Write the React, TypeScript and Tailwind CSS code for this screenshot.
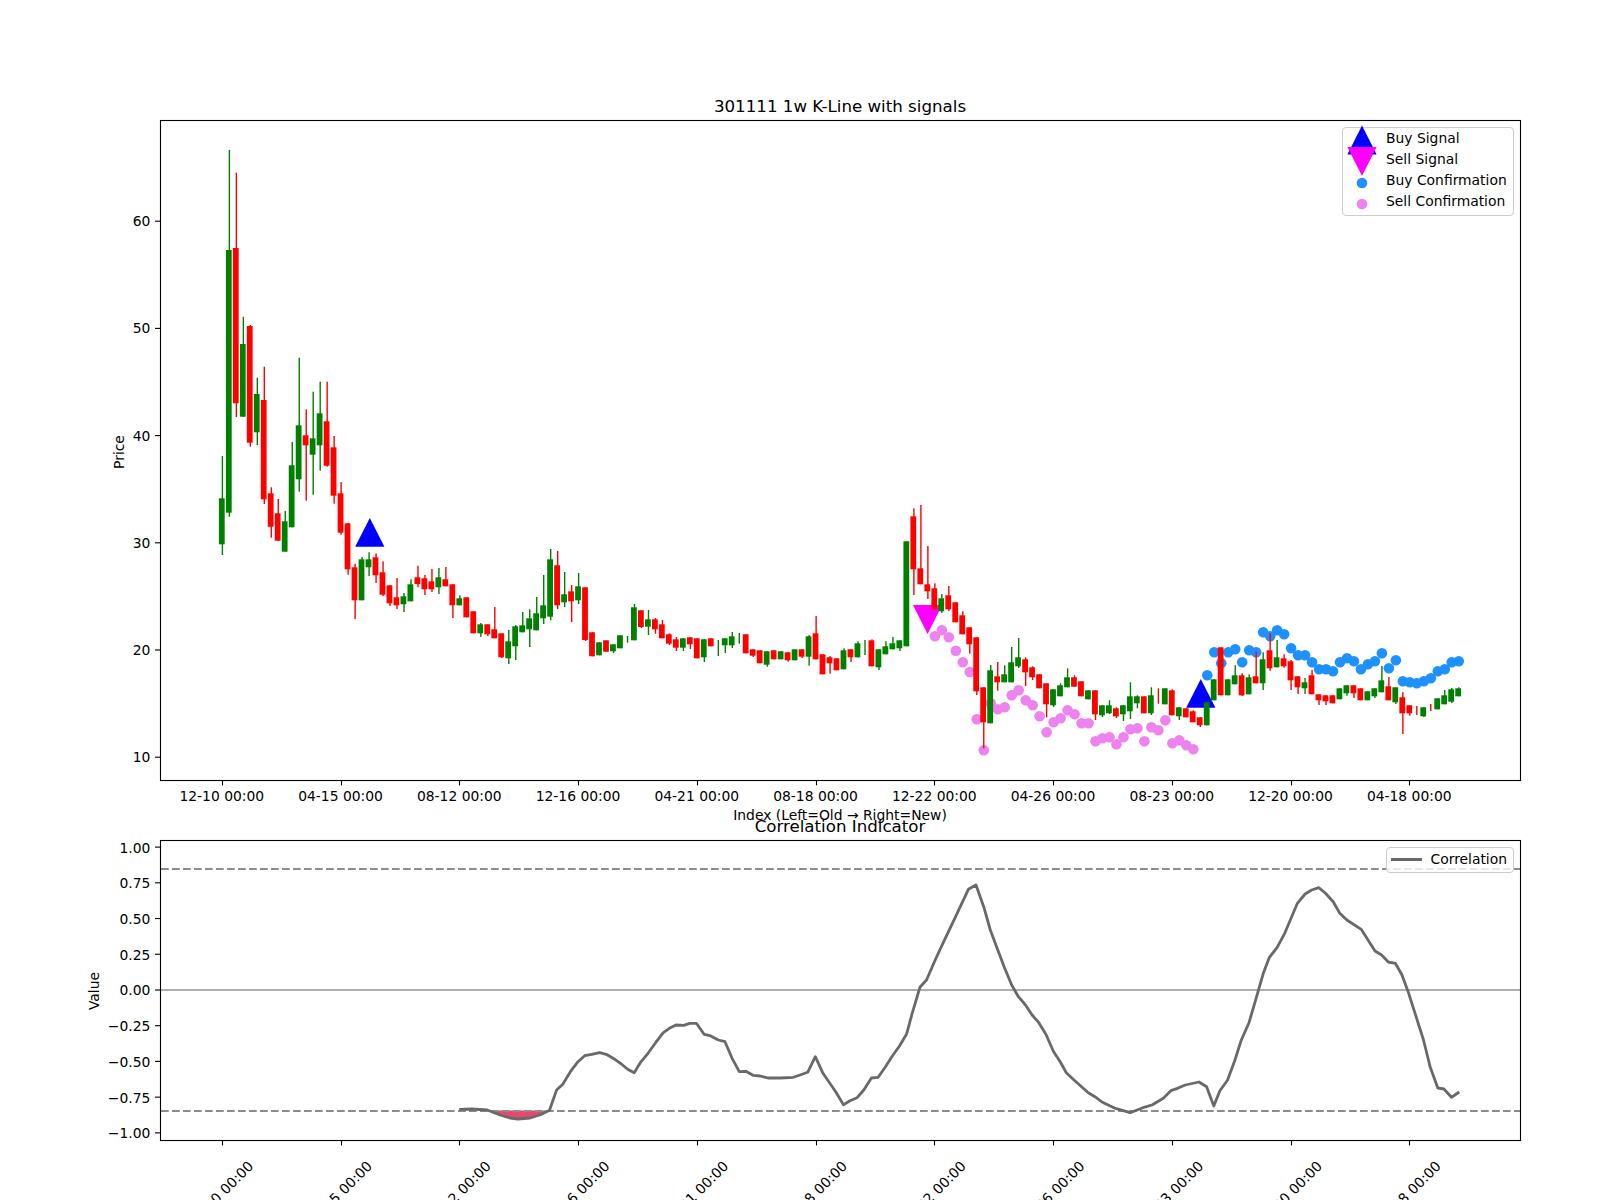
const GREEN = "#008000";
const RED = "#ff0000";

// candle index -> px
const cx = (i: number) => 221.8 + 6.985 * i;

// color, wick top, body top, body bottom, wick bottom (all in page px)
const candles: [string, number, number, number, number][] = [
  ["g", 456, 498.3, 544.3, 555], ["g", 150, 250, 512.7, 516.7], ["r", 172.7, 248, 403.3, 417], ["g", 316.7, 344, 416.7, 417],
  ["r", 325, 326, 442.7, 446.7], ["g", 377.7, 394, 432.3, 445], ["r", 366.7, 400, 499.3, 504], ["r", 487.3, 493.3, 526.7, 537.7],
  ["r", 499, 513.3, 540.7, 541], ["g", 511, 521.3, 551.7, 551.7], ["g", 442, 465.3, 527.3, 527.3], ["g", 357.7, 425.3, 479.3, 491.7],
  ["r", 409.3, 435.3, 445.3, 500.7], ["g", 391.7, 438.3, 454.7, 494.7], ["g", 381.7, 413.3, 445.3, 470.7], ["r", 381.7, 421.3, 465.7, 466.7],
  ["r", 436, 447.3, 495.7, 503.7], ["r", 482, 493.3, 532.7, 534.7], ["r", 523.3, 523.3, 569.3, 574.7], ["r", 563.7, 567.3, 600.3, 619],
  ["g", 557, 559.3, 600.3, 600.3], ["g", 552.3, 559.3, 567.3, 576], ["r", 553.3, 557.3, 575.3, 583], ["r", 561.3, 572.3, 594.7, 596],
  ["r", 585.3, 585.3, 603.3, 606], ["r", 578, 597.3, 605.3, 609], ["g", 593, 596.3, 604.3, 612], ["g", 579.3, 584.3, 601.3, 601.3],
  ["r", 565.7, 577.3, 584, 587.3], ["r", 575, 578.3, 589.3, 595], ["r", 569, 581.3, 589.3, 592], ["g", 568, 577.3, 587.3, 594],
  ["r", 567, 579.3, 586.3, 586.3], ["r", 584.3, 584.3, 605.3, 618], ["g", 595.3, 598.3, 605.3, 605.3], ["r", 597.3, 597.3, 617.3, 617.3],
  ["r", 611.3, 611.3, 633.3, 633.3], ["g", 623, 624.3, 633.3, 637], ["r", 624.3, 624.3, 634.3, 636], ["r", 607, 629.3, 638.3, 638.3],
  ["r", 633.3, 633.3, 657.3, 658], ["g", 630, 641.3, 658.3, 664], ["g", 625, 626.3, 646.3, 660], ["g", 612, 625.3, 632.3, 632.3],
  ["g", 609.3, 618.3, 629.3, 647], ["g", 597, 613.3, 630.3, 630.3], ["g", 575, 605.3, 618.3, 624], ["g", 549, 559.3, 616.7, 620.3],
  ["r", 551, 565.3, 605.3, 609], ["g", 572, 594.3, 602.3, 607], ["r", 585, 591.3, 601.3, 622], ["g", 573, 586.3, 600.3, 604],
  ["r", 587.3, 587.3, 640, 641], ["r", 632.3, 632.3, 656.3, 656.3], ["g", 642.3, 642.3, 655.3, 655.3], ["r", 640.3, 640.3, 651.7, 651.7],
  ["g", 644.3, 644.3, 651.3, 653], ["g", 635.3, 635.3, 648.3, 648.3], ["g", 636, 639, 639, 642.7], ["g", 604, 607.3, 640.3, 640.3],
  ["r", 610.3, 610.3, 627, 628], ["g", 610, 619.3, 626.7, 635], ["r", 618, 619.3, 629.3, 633.7], ["r", 620, 624.3, 638.3, 638.3],
  ["r", 633.3, 634.3, 643.7, 645], ["r", 637, 639.3, 647.7, 651], ["g", 638.3, 638.3, 647.7, 651], ["r", 637.3, 637.3, 644.3, 649],
  ["r", 638.3, 638.3, 658.3, 658.3], ["g", 639.3, 639.3, 657.3, 662], ["r", 638.3, 638.3, 646.3, 646.3], ["g", 640, 648, 648, 656],
  ["g", 638.3, 638.3, 645.3, 653], ["g", 632, 636.3, 645.3, 648], ["g", 633, 638, 638, 643.7], ["r", 634.3, 634.3, 653.3, 653.3],
  ["r", 649.3, 649.3, 655.7, 657], ["r", 650.3, 650.3, 663.3, 663.3], ["g", 651.3, 651.3, 664.7, 666.7], ["r", 650.3, 650.3, 659.3, 659.3],
  ["g", 651.3, 651.3, 659.3, 659.3], ["r", 652.3, 652.3, 660.3, 661.7], ["g", 649.3, 649.3, 660.3, 660.3], ["r", 649.3, 649.3, 656.7, 658],
  ["g", 635, 636.3, 656.7, 665.7], ["r", 616, 633.3, 659.3, 659.3], ["r", 654.3, 654.3, 674.3, 674.3], ["r", 656, 657.3, 663.3, 673.7],
  ["r", 658.3, 658.3, 670.3, 670.3], ["g", 648.3, 650.3, 669.3, 669.3], ["r", 649.3, 649.3, 657.3, 662], ["g", 641.3, 643.3, 657.3, 657.3],
  ["g", 640, 648, 648, 655], ["r", 639.3, 640.3, 666.3, 666.3], ["g", 649.3, 649.3, 667.3, 670], ["g", 641.3, 646.3, 654.3, 654.3],
  ["g", 637, 643.3, 649.3, 649.3], ["g", 640.3, 640.3, 648.3, 651], ["g", 541.3, 541.3, 646.3, 646.3], ["r", 508.3, 516.3, 569.3, 595],
  ["r", 505, 568.3, 584.3, 584.3], ["r", 546, 584.3, 591.3, 599], ["r", 583.3, 588.3, 609.3, 609.3], ["g", 594, 598.3, 611.3, 613],
  ["r", 586, 595.3, 609.3, 611], ["r", 602.3, 602.3, 622.3, 622.3], ["r", 611.3, 615.3, 634.3, 634.3], ["r", 627.3, 627.3, 644.3, 653.7],
  ["r", 637.3, 637.3, 691.3, 695], ["r", 687.3, 687.3, 722.3, 748.3], ["g", 665, 670.3, 723.3, 723.3], ["r", 662, 676.3, 682.3, 690.7],
  ["g", 665.3, 674.3, 682.3, 682.3], ["g", 647, 662.3, 682.3, 682.3], ["g", 638, 657.3, 666.3, 668], ["r", 657.3, 659.3, 672.3, 686],
  ["r", 666.3, 667.3, 677.3, 680], ["r", 674.3, 674.3, 688.3, 688.3], ["r", 683.3, 683.3, 704.3, 717.3], ["g", 689.3, 689.3, 705.3, 707],
  ["g", 683.3, 685.3, 696.3, 696.3], ["g", 668.3, 677.3, 687.3, 687.3], ["r", 675.3, 677.3, 686.7, 686.7], ["r", 681.3, 681.3, 696.3, 696.3],
  ["g", 690.3, 690.3, 699.3, 699.3], ["r", 690.3, 690.3, 714.3, 720], ["g", 705.3, 705.3, 715.3, 717], ["g", 700.3, 705.3, 713.3, 714],
  ["r", 707.3, 708.3, 716.3, 718], ["g", 705.3, 705.3, 714.3, 721], ["g", 682.3, 696.3, 711.3, 719], ["g", 695.3, 696.3, 703.3, 708.3],
  ["r", 696.3, 696.3, 713.3, 713.3], ["g", 687.3, 695.3, 713.3, 715], ["r", 688.3, 696, 696, 703.7], ["g", 688.3, 688.3, 704.3, 704.3],
  ["r", 689.3, 690.3, 715.3, 715.3], ["g", 707.3, 707.3, 716.3, 720], ["r", 708.3, 708.3, 717.3, 717.3], ["r", 710.3, 711.3, 722.3, 722.3],
  ["r", 717.3, 717.3, 725.3, 727], ["g", 702.3, 702.3, 725.3, 725.3], ["g", 679.3, 679.3, 700.3, 700.3], ["r", 647.3, 647.3, 695.3, 695.3],
  ["g", 679.3, 679.3, 695.3, 695.3], ["g", 665.3, 675.3, 684.3, 684.3], ["r", 673.3, 675.3, 695.3, 696], ["g", 674.3, 677.3, 694.3, 694.3],
  ["r", 651.3, 676.3, 683.3, 683.3], ["g", 652.3, 659.3, 683.3, 690], ["r", 633.3, 650.3, 668.3, 670.7], ["g", 640, 657.3, 667.3, 667.3],
  ["r", 654.3, 658.3, 666.3, 667.7], ["r", 660, 661.3, 680.3, 690], ["r", 676.3, 676.3, 687.3, 694], ["g", 678, 682.3, 688.3, 694],
  ["r", 670, 675.3, 694.3, 694.3], ["r", 694.3, 694.3, 700.3, 705], ["r", 695.3, 695.3, 701.3, 705], ["r", 695.3, 695.3, 703.3, 703.3],
  ["g", 688.3, 688.3, 699.3, 699.3], ["g", 685.3, 685.3, 693.3, 695.7], ["r", 685.3, 685.3, 693.3, 698], ["r", 688.3, 688.3, 700.3, 700.3],
  ["g", 691.3, 691.3, 700.3, 700.3], ["g", 688.3, 688.3, 696.3, 698], ["g", 666, 680.3, 692.3, 692.3], ["r", 677, 686.3, 700.3, 700.3],
  ["g", 687.3, 687.3, 702.3, 704], ["r", 692.3, 697.3, 713.3, 734], ["r", 705.3, 705.3, 713.3, 715.7], ["r", 706, 710, 710, 715],
  ["g", 707.3, 707.3, 716.3, 717], ["r", 704, 708, 708, 711], ["g", 698.3, 698.3, 709.3, 709.3], ["g", 690, 695.3, 704.3, 704.3],
  ["g", 688, 689.3, 701.7, 703], ["g", 687.3, 688.3, 696.3, 696.3],
];

// confirmation dots, one per candle starting at the given index
const sellStart = 102;
const sellDots = [
  636.3, 630.3, 637.3, 650.7, 662.3, 672, 719.3, 750.3, 703.3, 709.3, 707.3, 695.3, 690.3, 700.3, 705.3, 716.3, 732.3, 722.3, 718.3,
  710.3, 714.3, 723.3, 723.3, 741.3, 738.3, 737.3, 744.3, 737.3, 729.3, 728.3, 741.3, 727.3, 730.3, 720.3, 743.3, 740.3, 745.3, 749.3,
];
const buyStart = 141;
const buyDots = [
  675.3, 652.3, 663.3, 652.3, 649.3, 662.3, 650.3, 652.3, 632.3, 636.3, 630.3, 634.3, 648.3, 655.3, 655.3, 662.3, 669.3, 669.3, 671.3,
  662.3, 658.3, 661.3, 669.3, 664.3, 661.3, 653.3, 668.3, 660.3, 681.3, 682.3, 683.3, 681.3, 678.3, 671.3, 669.3, 662.3, 661.3,
];

const corr =
  "459.2,1109.3 472,1109 487.2,1110 500,1115 510,1118 518,1119 530,1118 541,1114.5 549.5,1110.3 556.6,1090 562.8,1084.3 570.4,1071.7 578,1061.7 584.7,1055.7 591.8,1054.3 599.5,1052.7 607.1,1054.7 614.8,1059.3 621.4,1064 627.6,1069.3 634.2,1072.7 640.3,1062.7 648,1053.3 655.6,1042.7 663.3,1032.7 669.4,1028.3 676,1025 683.7,1025.3 689.8,1023.3 696.4,1023.3 704.1,1034.3 710.2,1035.7 718.4,1040 725,1041.7 732.1,1058.3 739.3,1071.7 745.9,1071.3 753,1075.3 760.2,1076 767.9,1078 780.6,1078 793.4,1077.3 800,1075 807.7,1072.3 815.3,1056.7 823,1073.3 835.7,1091.7 843.4,1104.7 850,1100.7 857.1,1097.7 863.8,1090 871.4,1078 878.1,1077.3 885.2,1067.3 891.8,1056.7 899.5,1046 906.6,1034 912.2,1013.3 919.9,987.3 926.5,980 935.2,960 942.9,943.3 955.6,916.7 968.4,889.3 976,885 983.7,906.7 990.3,930 1004.1,966.7 1011.7,985 1018.4,996.7 1025.5,1005 1032.1,1015 1038.8,1022.7 1045.9,1034.3 1053.6,1051.7 1060.2,1061.7 1066.3,1072.7 1074,1080 1088.3,1092.7 1094.9,1096.7 1102,1102 1109.7,1105.7 1116.3,1108.7 1130.1,1112.7 1142.9,1107.7 1152,1105 1163.3,1098.3 1171.4,1090.3 1177.6,1088.3 1185.2,1085 1199,1082 1206.6,1086.7 1213.8,1106 1219.9,1090.7 1227.6,1080 1234.7,1060.7 1241.3,1040 1249,1022.7 1256.6,996.7 1263.3,973.3 1269.4,957.3 1277,947.7 1284.7,933.3 1297.4,903.3 1305.1,894 1311.7,890 1318.9,887.7 1325.5,893.3 1333.2,901.7 1339.8,913.3 1346.9,920 1361.2,929.3 1375,951 1381.6,955 1388.3,962 1395.4,963.3 1402,975 1408.7,993.3 1423.5,1040 1430.1,1066.7 1437.8,1088 1443.9,1089 1451.5,1097.3 1459.2,1092";

const dates = ["12-10", "04-15", "08-12", "12-16", "04-21", "08-18", "12-22", "04-26", "08-23", "12-20", "04-18"];
const priceTicks = [60, 50, 40, 30, 20, 10];
const corrTicks = ["1.00", "0.75", "0.50", "0.25", "0.00", "−0.25", "−0.50", "−0.75", "−1.00"];

function Candle({ i, c }: { i: number; c: (typeof candles)[number] }) {
  const x = cx(i);
  const fill = c[0] === "g" ? GREEN : RED;
  return (
    <g>
      <rect x={x - 0.1} y={c[1]} width={1.4} height={c[4] - c[1]} fill={fill} />
      {c[3] > c[2] && <rect x={x - 2.9} y={c[2]} width={5.8} height={c[3] - c[2]} fill={fill} />}
    </g>
  );
}

function Triangle({ x, apex, base, fill }: { x: number; apex: number; base: number; fill: string }) {
  return <polygon points={`${x},${apex} ${x - 14.6},${base} ${x + 14.6},${base}`} fill={fill} />;
}

function Frame({ top, bottom }: { top: number; bottom: number }) {
  return (
    <g>
      <rect x={160.5} y={top + 0.5} width={1360} height={bottom - top} fill="none" stroke="#000" strokeWidth={1.1} />
      {dates.map((_, n) => {
        const x = Math.round(cx(n * 17)) + 0.5;
        return <line key={n} x1={x} x2={x} y1={bottom} y2={bottom + 5.4} stroke="#000" strokeWidth={1.1} />;
      })}
    </g>
  );
}

function PriceChart() {
  return (
    <svg viewBox="0 120 1600 696" className="block w-[1600px] h-[696px] overflow-visible">
      {sellDots.map((y, n) => (
        <circle key={n} cx={cx(sellStart + n) + 0.6} cy={y} r={5.3} fill="#ee82ee" />
      ))}
      {buyDots.map((y, n) => (
        <circle key={n} cx={cx(buyStart + n) + 0.6} cy={y} r={5.3} fill="#1e90ff" />
      ))}
      <Triangle x={369.8} apex={518} base={546.7} fill="#0000ff" />
      <Triangle x={1200.8} apex={679} base={707.7} fill="#0000ff" />
      <Triangle x={927.6} apex={634} base={605} fill="#ff00ff" />
      {candles.map((c, i) => (
        <Candle key={i} i={i} c={c} />
      ))}
      <Frame top={120} bottom={780} />
      {priceTicks.map((v) => {
        const y = 221.2 + (60 - v) * 10.72;
        return (
          <g key={v}>
            <line x1={155} x2={160} y1={y} y2={y} stroke="#000" strokeWidth={1.1} />
            <text x={150.3} y={y + 5} textAnchor="end" className="text-[13.89px]">
              {v}
            </text>
          </g>
        );
      })}
      {dates.map((d, n) => (
        <text key={d} x={cx(n * 17)} y={801} textAnchor="middle" className="text-[13.89px]">
          {d} 00:00
        </text>
      ))}
      <text x={124} y={452} textAnchor="middle" transform="rotate(-90 124 452)" className="text-[13.89px]">
        Price
      </text>
      <text x={840} y={820} textAnchor="middle" className="text-[13.89px]">
        Index (Left=Old → Right=New)
      </text>
    </svg>
  );
}

function CorrelationChart() {
  return (
    <svg viewBox="0 840 1600 360" className="block w-[1600px] h-[360px] overflow-visible">
      <polygon points="492,1110.5 500,1115 510,1118 518,1119 530,1118 541,1114.5 547,1110.5" fill="#e8476e" />
      <line x1={161} x2={1520} y1={869} y2={869} stroke="#8c8c8c" strokeWidth={2} strokeDasharray="7.7 3.3" />
      <line x1={161} x2={1520} y1={1111} y2={1111} stroke="#8c8c8c" strokeWidth={2} strokeDasharray="7.7 3.3" />
      <line x1={161} x2={1520} y1={990} y2={990} stroke="#aeaeae" strokeWidth={2} />
      <polyline points={corr} fill="none" stroke="#696969" strokeWidth={2.8} strokeLinejoin="round" />
      <Frame top={840} bottom={1140} />
      {corrTicks.map((t, n) => {
        const y = 847.1 + n * 35.72;
        return (
          <g key={t}>
            <line x1={155} x2={160} y1={y} y2={y} stroke="#000" strokeWidth={1.1} />
            <text x={150.3} y={y + 5.4} textAnchor="end" className="text-[13.89px]">
              {t}
            </text>
          </g>
        );
      })}
      {dates.map((d, n) => {
        const x = cx(n * 17) + 2.5;
        return (
          <text key={d} x={x} y={1197} textAnchor="middle" transform={`rotate(-45 ${x} 1197)`} className="text-[13.89px]">
            {d} 00:00
          </text>
        );
      })}
      <text x={99} y={991} textAnchor="middle" transform="rotate(-90 99 991)" className="text-[13.89px]">
        Value
      </text>
    </svg>
  );
}

function LegendRow({ label, marker }: { label: string; marker: React.ReactNode }) {
  return (
    <div className="flex h-[21px] items-center">
      <svg viewBox="0 0 30 20" className="ml-[4px] h-[20px] w-[30px] shrink-0 overflow-visible">
        {marker}
      </svg>
      <span className="ml-[9px] whitespace-nowrap">{label}</span>
    </div>
  );
}

function SignalLegend() {
  return (
    <div className="absolute top-[7px] right-[86.5px] w-[171.5px] h-[88.6px] rounded-[4px] border border-[#cccccc] bg-white/80 text-[13.89px]">
      <LegendRow label="Buy Signal" marker={<polygon points="15,-3.5 0.4,25.5 29.6,25.5" fill="#0000ff" />} />
      <LegendRow label="Sell Signal" marker={<polygon points="15,26 0.4,-3 29.6,-3" fill="#ff00ff" />} />
      <LegendRow label="Buy Confirmation" marker={<circle cx={15} cy={12} r={5.3} fill="#1e90ff" />} />
      <LegendRow label="Sell Confirmation" marker={<circle cx={15} cy={12} r={5.3} fill="#ee82ee" />} />
    </div>
  );
}

function CorrelationLegend() {
  return (
    <div className="absolute top-[7px] right-[86.5px] flex h-[25.5px] w-[128px] items-center rounded-[4px] border border-[#cccccc] bg-white/80 text-[13.89px]">
      <span className="ml-[4px] h-[2.8px] w-[31px] bg-[#696969]" />
      <span className="ml-[9px]">Correlation</span>
    </div>
  );
}

export default function App() {
  return (
    <div className="w-[1600px] h-[1200px] overflow-hidden bg-white text-black font-['DejaVu_Sans',sans-serif]">
      <div className="flex h-[120px] items-end justify-center pl-[160px] pr-[80px] pb-[1px] text-[16.67px]">
        301111 1w K-Line with signals
      </div>
      <div className="relative">
        <PriceChart />
        <SignalLegend />
      </div>
      <div className="flex h-[24px] items-end justify-center pl-[160px] pr-[80px] pb-[3px] text-[16.67px] leading-[20px]">
        Correlation Indicator
      </div>
      <div className="relative">
        <CorrelationChart />
        <CorrelationLegend />
      </div>
    </div>
  );
}
